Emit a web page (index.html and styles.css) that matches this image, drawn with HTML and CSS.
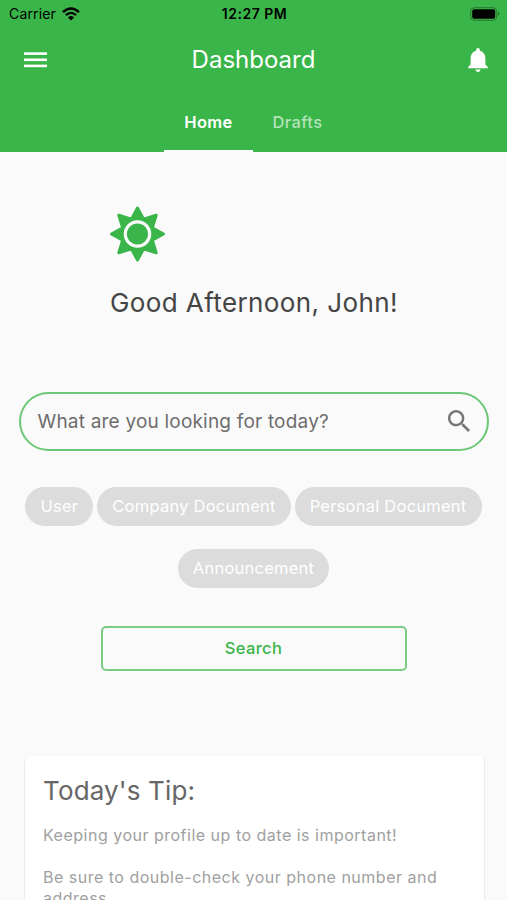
FILE: index.html
```html
<!DOCTYPE html>
<html lang="en">
<head>
    <meta charset="UTF-8">
    <meta name="viewport" content="width=device-width, initial-scale=1.0">
    <title>Dashboard</title>
    <link rel="stylesheet" href="styles.css">
</head>
<body>
    <header class="header">
        <div class="status-bar">
            <div class="carrier">
                <span class="carrier-name">Carrier</span>
                <svg class="wifi" viewBox="0 0 18 14">
                    <path d="M1 5.2 Q9 -2.2 17 5.2" stroke="#000" stroke-width="2.5" fill="none" />
                    <path d="M3.9 8.2 Q9 3.6 14.1 8.2" stroke="#000" stroke-width="2.3" fill="none" />
                    <path d="M6 10.4 Q9 7.8 12 10.4 L9 13.4 Z" />
                </svg>
            </div>
            <span class="time">12:27 PM</span>
            <svg class="battery" viewBox="0 0 30 14">
                <rect x="0.7" y="0.7" width="26" height="12.6" rx="3.6" fill="none" stroke="#27762f" stroke-width="1" />
                <rect x="2.2" y="2.2" width="23" height="9.6" rx="2" />
                <path d="M28 4.8 Q30.8 7 28 9.2 Z" fill="#27762f" />
            </svg>
        </div>
        <div class="app-bar">
            <svg class="menu-icon" viewBox="0 0 23 16" fill="#fff">
                <rect y="0.3" width="23" height="2.6" />
                <rect y="6.5" width="23" height="2.6" />
                <rect y="12.6" width="23" height="2.6" />
            </svg>
            <h1 class="title">Dashboard</h1>
            <svg class="bell-icon" viewBox="4 2.5 16 19.5" fill="#fff">
                <path d="M12 22c1.1 0 2-.9 2-2h-4c0 1.1.89 2 2 2zm6-6v-5c0-3.07-1.64-5.64-4.5-6.32V4c0-.83-.67-1.5-1.5-1.5s-1.5.67-1.5 1.5v.68C7.63 5.36 6 7.92 6 11v5l-2 2v1h16v-1l-2-2z" />
            </svg>
        </div>
        <nav class="tabs">
            <div class="tab active">Home</div>
            <div class="tab">Drafts</div>
        </nav>
    </header>

    <main class="content">
        <section class="greeting">
            <svg class="sun" viewBox="-27.5 -28 56 56">
                <path d="M0 -26 L6.1 -14.8 L18.7 -18.7 L14.8 -6.1 L26 0 L14.8 6.1 L18.7 18.7 L6.1 14.8 L0 26 L-6.1 14.8 L-18.7 18.7 L-14.8 6.1 L-26 0 L-14.8 -6.1 L-18.7 -18.7 L-6.1 -14.8 Z" fill="#3ab549" stroke="#3ab549" stroke-width="3" stroke-linejoin="round" />
                <circle r="12.2" fill="#3ab549" stroke="#fafafa" stroke-width="3.2" />
            </svg>
            <h2 class="hello">Good Afternoon, John!</h2>
        </section>

        <div class="search-box">
            <span class="placeholder">What are you looking for today?</span>
            <svg class="search-icon" viewBox="3 3 17.5 17.5" fill="#777">
                <path d="M15.5 14h-.79l-.28-.27C15.41 12.59 16 11.11 16 9.5 16 5.91 13.09 3 9.5 3S3 5.91 3 9.5 5.91 16 9.5 16c1.61 0 3.09-.59 4.23-1.57l.27.28v.79l5 4.99L20.49 19l-4.99-5zm-6 0C7.01 14 5 11.99 5 9.5S7.01 5 9.5 5 14 7.01 14 9.5 11.99 14 9.5 14z" />
            </svg>
        </div>

        <div class="chips">
            <span class="chip">User</span>
            <span class="chip">Company Document</span>
            <span class="chip">Personal Document</span>
            <span class="chip">Announcement</span>
        </div>

        <button class="search-button">Search</button>

        <section class="tip">
            <h3 class="tip-title">Today's Tip:</h3>
            <p>Keeping your profile up to date is important!</p>
            <p>Be sure to double-check your phone number and address.</p>
        </section>
    </main>
</body>
</html>
```

FILE: styles.css
```css
* {
    box-sizing: border-box;
}
html, body {
    margin: 0;
    padding: 0;
    height: 100%;
    overflow: hidden;
}
body {
    display: flex;
    flex-direction: column;
    background: #fafafa;
    font-family: Inter, Roboto, sans-serif;
}
h1, h2, h3, p {
    margin: 0;
    font-weight: 400;
}
svg {
    display: block;
    flex: none;
}
.header {
    flex: none;
    height: 152px;
    background: #3ab549;
    color: #fff;
}
.status-bar {
    display: grid;
    grid-template-columns: 1fr auto 1fr;
    align-items: center;
    height: 27px;
    padding: 0 7px 0 9px;
    color: #000;
    font-size: 14px;
}
.carrier {
    display: flex;
    align-items: center;
    gap: 6px;
    letter-spacing: 0.15px;
}
.wifi {
    width: 18px;
    height: 14px;
}
.time {
    font-weight: 600;
    letter-spacing: 0.5px;
}
.battery {
    width: 30px;
    height: 14px;
    justify-self: end;
}
.app-bar {
    display: flex;
    justify-content: space-between;
    align-items: center;
    height: 65px;
    padding: 0 19px 0 24px;
}
.menu-icon {
    width: 23px;
    height: 16px;
}
.title {
    padding-right: 8px;
    font-size: 24px;
}
.bell-icon {
    width: 20px;
    height: 24px;
}
.tabs {
    display: flex;
    justify-content: center;
    height: 60px;
    padding-right: 1px;
}
.tab {
    display: flex;
    justify-content: center;
    align-items: center;
    width: 89px;
    padding-top: 1px;
    border-bottom: 2px solid transparent;
    font-size: 16.5px;
    font-weight: 500;
    letter-spacing: 0.4px;
    color: #b4e3b9;
}
.tab.active {
    border-bottom-color: #fff;
    color: #fff;
    font-weight: 600;
}
.content {
    display: flex;
    flex: 1;
    flex-direction: column;
    align-items: center;
    min-height: 0;
    padding-top: 54px;
    overflow: hidden;
}
.content > * {
    flex: none;
}
.greeting {
    width: 287px;
}
.sun {
    width: 56px;
    height: 56px;
}
.hello {
    margin-top: 24px;
    font-size: 26px;
    line-height: 34px;
    letter-spacing: 0.4px;
    white-space: nowrap;
    color: #444;
}
.search-box {
    display: flex;
    justify-content: space-between;
    align-items: center;
    width: 470px;
    height: 59px;
    margin-top: 72px;
    padding: 0 17px;
    border: 2px solid #6cc777;
    border-radius: 30px;
    color: #6d6d6d;
    font-size: 19px;
    letter-spacing: 0.2px;
}
.search-icon {
    width: 22px;
    height: 22px;
    margin-bottom: 2px;
}
.chips {
    display: flex;
    flex-wrap: wrap;
    justify-content: center;
    gap: 23px 4px;
    width: 470px;
    margin-top: 36px;
}
.chip {
    display: flex;
    justify-content: center;
    align-items: center;
    height: 39px;
    padding: 0 15px 1px;
    border-radius: 20px;
    background: #dcdcdc;
    color: #fff;
    font-size: 16.5px;
    letter-spacing: 0.24px;
    white-space: nowrap;
}
.search-button {
    width: 306px;
    height: 45px;
    margin-top: 38px;
    padding: 0 0 2px;
    border: 2px solid #7acc84;
    border-radius: 5px;
    background: transparent;
    color: #3ab549;
    font-family: inherit;
    font-size: 16.5px;
    font-weight: 500;
    letter-spacing: 0.35px;
}
.tip {
    width: 459px;
    margin: 85px 0 0 2px;
    padding: 18px;
    border-radius: 5px;
    background: #fff;
    box-shadow: 0 1px 2px rgba(0, 0, 0, 0.2);
    color: #a0a0a0;
}
.tip-title {
    color: #666;
    font-size: 26px;
    line-height: 34px;
    letter-spacing: 0.15px;
}
.tip p {
    margin-top: 17px;
    font-size: 16px;
    line-height: 20.5px;
    letter-spacing: 0.5px;
}
.tip p + p {
    margin-top: 21.5px;
}
```
